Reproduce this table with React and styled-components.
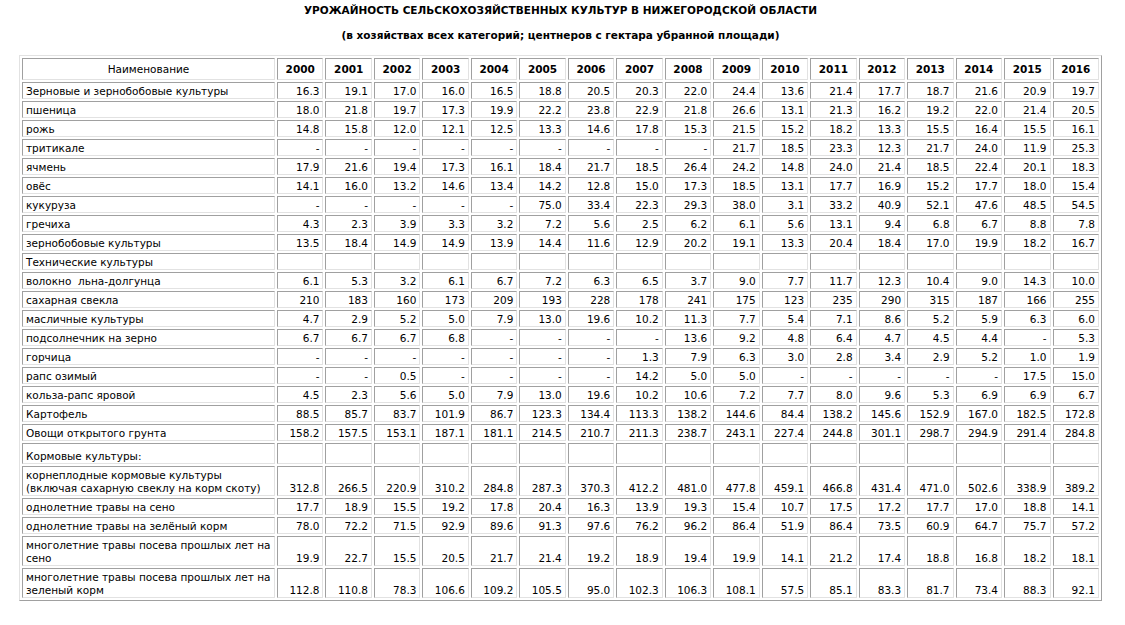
import styled, { createGlobalStyle } from "styled-components";

const GlobalStyle = createGlobalStyle`
  * {
    box-sizing: border-box;
  }

  body {
    margin: 0;
    background: #fff;
    color: #000;
    font-family: "DejaVu Sans", Verdana, sans-serif;
  }
`;

const Page = styled.div`
  width: 1083px;
  margin-left: 19px;
`;

const Title = styled.div`
  text-align: center;
  font-weight: bold;
  font-size: 10.5px;
  line-height: 13px;
  padding-top: ${(p) => p.$top}px;
`;

const Table = styled.table`
  margin-top: 13px;
  width: 1083px;
  table-layout: fixed;
  border-collapse: separate;
  border-spacing: 2px;
  border: 1px solid;
  border-color: #e2e2e2 #a0a0a0 #a0a0a0 #e2e2e2;
  font-size: 10.5px;
  line-height: 13px;
`;

const Cell = styled.td`
  border: 1px solid;
  border-color: #a0a0a0 #e2e2e2 #e2e2e2 #a0a0a0;
  padding: ${(p) => (p.$pad ? p.$pad : 2)}px 3px 0 3px;
  vertical-align: bottom;
  text-align: right;
  white-space: nowrap;
`;

const NameCell = styled(Cell)`
  text-align: left;
  white-space: pre-wrap;
  padding-left: 3px;
`;

const HeadCell = styled.th`
  border: 1px solid;
  border-color: #a0a0a0 #e2e2e2 #e2e2e2 #a0a0a0;
  padding: 4px 2px 3px;
  text-align: center;
  font-weight: ${(p) => (p.$plain ? "normal" : "bold")};
  width: ${(p) => (p.$w ? `${p.$w}px` : "auto")};
`;

const years = [2000, 2001, 2002, 2003, 2004, 2005, 2006, 2007, 2008, 2009, 2010, 2011, 2012, 2013, 2014, 2015, 2016];

const rows = [
  ["Зерновые и зернобобовые культуры", "16.3 19.1 17.0 16.0 16.5 18.8 20.5 20.3 22.0 24.4 13.6 21.4 17.7 18.7 21.6 20.9 19.7"],
  ["пшеница", "18.0 21.8 19.7 17.3 19.9 22.2 23.8 22.9 21.8 26.6 13.1 21.3 16.2 19.2 22.0 21.4 20.5"],
  ["рожь", "14.8 15.8 12.0 12.1 12.5 13.3 14.6 17.8 15.3 21.5 15.2 18.2 13.3 15.5 16.4 15.5 16.1"],
  ["тритикале", "- - - - - - - - - 21.7 18.5 23.3 12.3 21.7 24.0 11.9 25.3"],
  ["ячмень", "17.9 21.6 19.4 17.3 16.1 18.4 21.7 18.5 26.4 24.2 14.8 24.0 21.4 18.5 22.4 20.1 18.3"],
  ["овёс", "14.1 16.0 13.2 14.6 13.4 14.2 12.8 15.0 17.3 18.5 13.1 17.7 16.9 15.2 17.7 18.0 15.4"],
  ["кукуруза", "- - - - - 75.0 33.4 22.3 29.3 38.0 3.1 33.2 40.9 52.1 47.6 48.5 54.5"],
  ["гречиха", "4.3 2.3 3.9 3.3 3.2 7.2 5.6 2.5 6.2 6.1 5.6 13.1 9.4 6.8 6.7 8.8 7.8"],
  ["зернобобовые культуры", "13.5 18.4 14.9 14.9 13.9 14.4 11.6 12.9 20.2 19.1 13.3 20.4 18.4 17.0 19.9 18.2 16.7"],
  ["Технические культуры", ""],
  ["волокно  льна-долгунца", "6.1 5.3 3.2 6.1 6.7 7.2 6.3 6.5 3.7 9.0 7.7 11.7 12.3 10.4 9.0 14.3 10.0"],
  ["сахарная свекла", "210 183 160 173 209 193 228 178 241 175 123 235 290 315 187 166 255"],
  ["масличные культуры", "4.7 2.9 5.2 5.0 7.9 13.0 19.6 10.2 11.3 7.7 5.4 7.1 8.6 5.2 5.9 6.3 6.0"],
  ["подсолнечник на зерно", "6.7 6.7 6.7 6.8 - - - - 13.6 9.2 4.8 6.4 4.7 4.5 4.4 - 5.3"],
  ["горчица", "- - - - - - - 1.3 7.9 6.3 3.0 2.8 3.4 2.9 5.2 1.0 1.9"],
  ["рапс озимый", "- - 0.5 - - - - 14.2 5.0 5.0 - - - - - 17.5 15.0"],
  ["кольза-рапс яровой", "4.5 2.3 5.6 5.0 7.9 13.0 19.6 10.2 10.6 7.2 7.7 8.0 9.6 5.3 6.9 6.9 6.7"],
  ["Картофель", "88.5 85.7 83.7 101.9 86.7 123.3 134.4 113.3 138.2 144.6 84.4 138.2 145.6 152.9 167.0 182.5 172.8"],
  ["Овощи открытого грунта", "158.2 157.5 153.1 187.1 181.1 214.5 210.7 211.3 238.7 243.1 227.4 244.8 301.1 298.7 294.9 291.4 284.8"],
  ["Кормовые культуры:", "", 6],
  ["корнеплодные кормовые культуры (включая сахарную свеклу на корм скоту)", "312.8 266.5 220.9 310.2 284.8 287.3 370.3 412.2 481.0 477.8 459.1 466.8 431.4 471.0 502.6 338.9 389.2"],
  ["однолетние травы на сено", "17.7 18.9 15.5 19.2 17.8 20.4 16.3 13.9 19.3 15.4 10.7 17.5 17.2 17.7 17.0 18.8 14.1"],
  ["однолетние травы на зелёный корм", "78.0 72.2 71.5 92.9 89.6 91.3 97.6 76.2 96.2 86.4 51.9 86.4 73.5 60.9 64.7 75.7 57.2"],
  ["многолетние травы посева прошлых лет на сено", "19.9 22.7 15.5 20.5 21.7 21.4 19.2 18.9 19.4 19.9 14.1 21.2 17.4 18.8 16.8 18.2 18.1"],
  ["многолетние травы посева прошлых лет на зеленый корм", "112.8 110.8 78.3 106.6 109.2 105.5 95.0 102.3 106.3 108.1 57.5 85.1 83.3 81.7 73.4 88.3 92.1"],
];

const App = () => {
  return (
    <>
      <GlobalStyle />
      <Page>
        <Title $top={4}>УРОЖАЙНОСТЬ СЕЛЬСКОХОЗЯЙСТВЕННЫХ КУЛЬТУР В НИЖЕГОРОДСКОЙ ОБЛАСТИ</Title>
        <Title $top={12}>(в хозяйствах всех категорий; центнеров с гектара убранной площади)</Title>
        <Table>
          <thead>
            <tr>
              <HeadCell $plain $w={253}>Наименование</HeadCell>
              {years.map((y) => (
                <HeadCell key={y}>{y}</HeadCell>
              ))}
            </tr>
          </thead>
          <tbody>
            {rows.map(([name, vals, pad]) => {
              const list = vals ? vals.split(" ") : years.map(() => "\u00a0");
              return (
                <tr key={name}>
                  <NameCell $pad={pad}>{name}</NameCell>
                  {list.map((v, i) => (
                    <Cell key={i} $pad={pad}>{v}</Cell>
                  ))}
                </tr>
              );
            })}
          </tbody>
        </Table>
      </Page>
    </>
  );
};

export default App;
